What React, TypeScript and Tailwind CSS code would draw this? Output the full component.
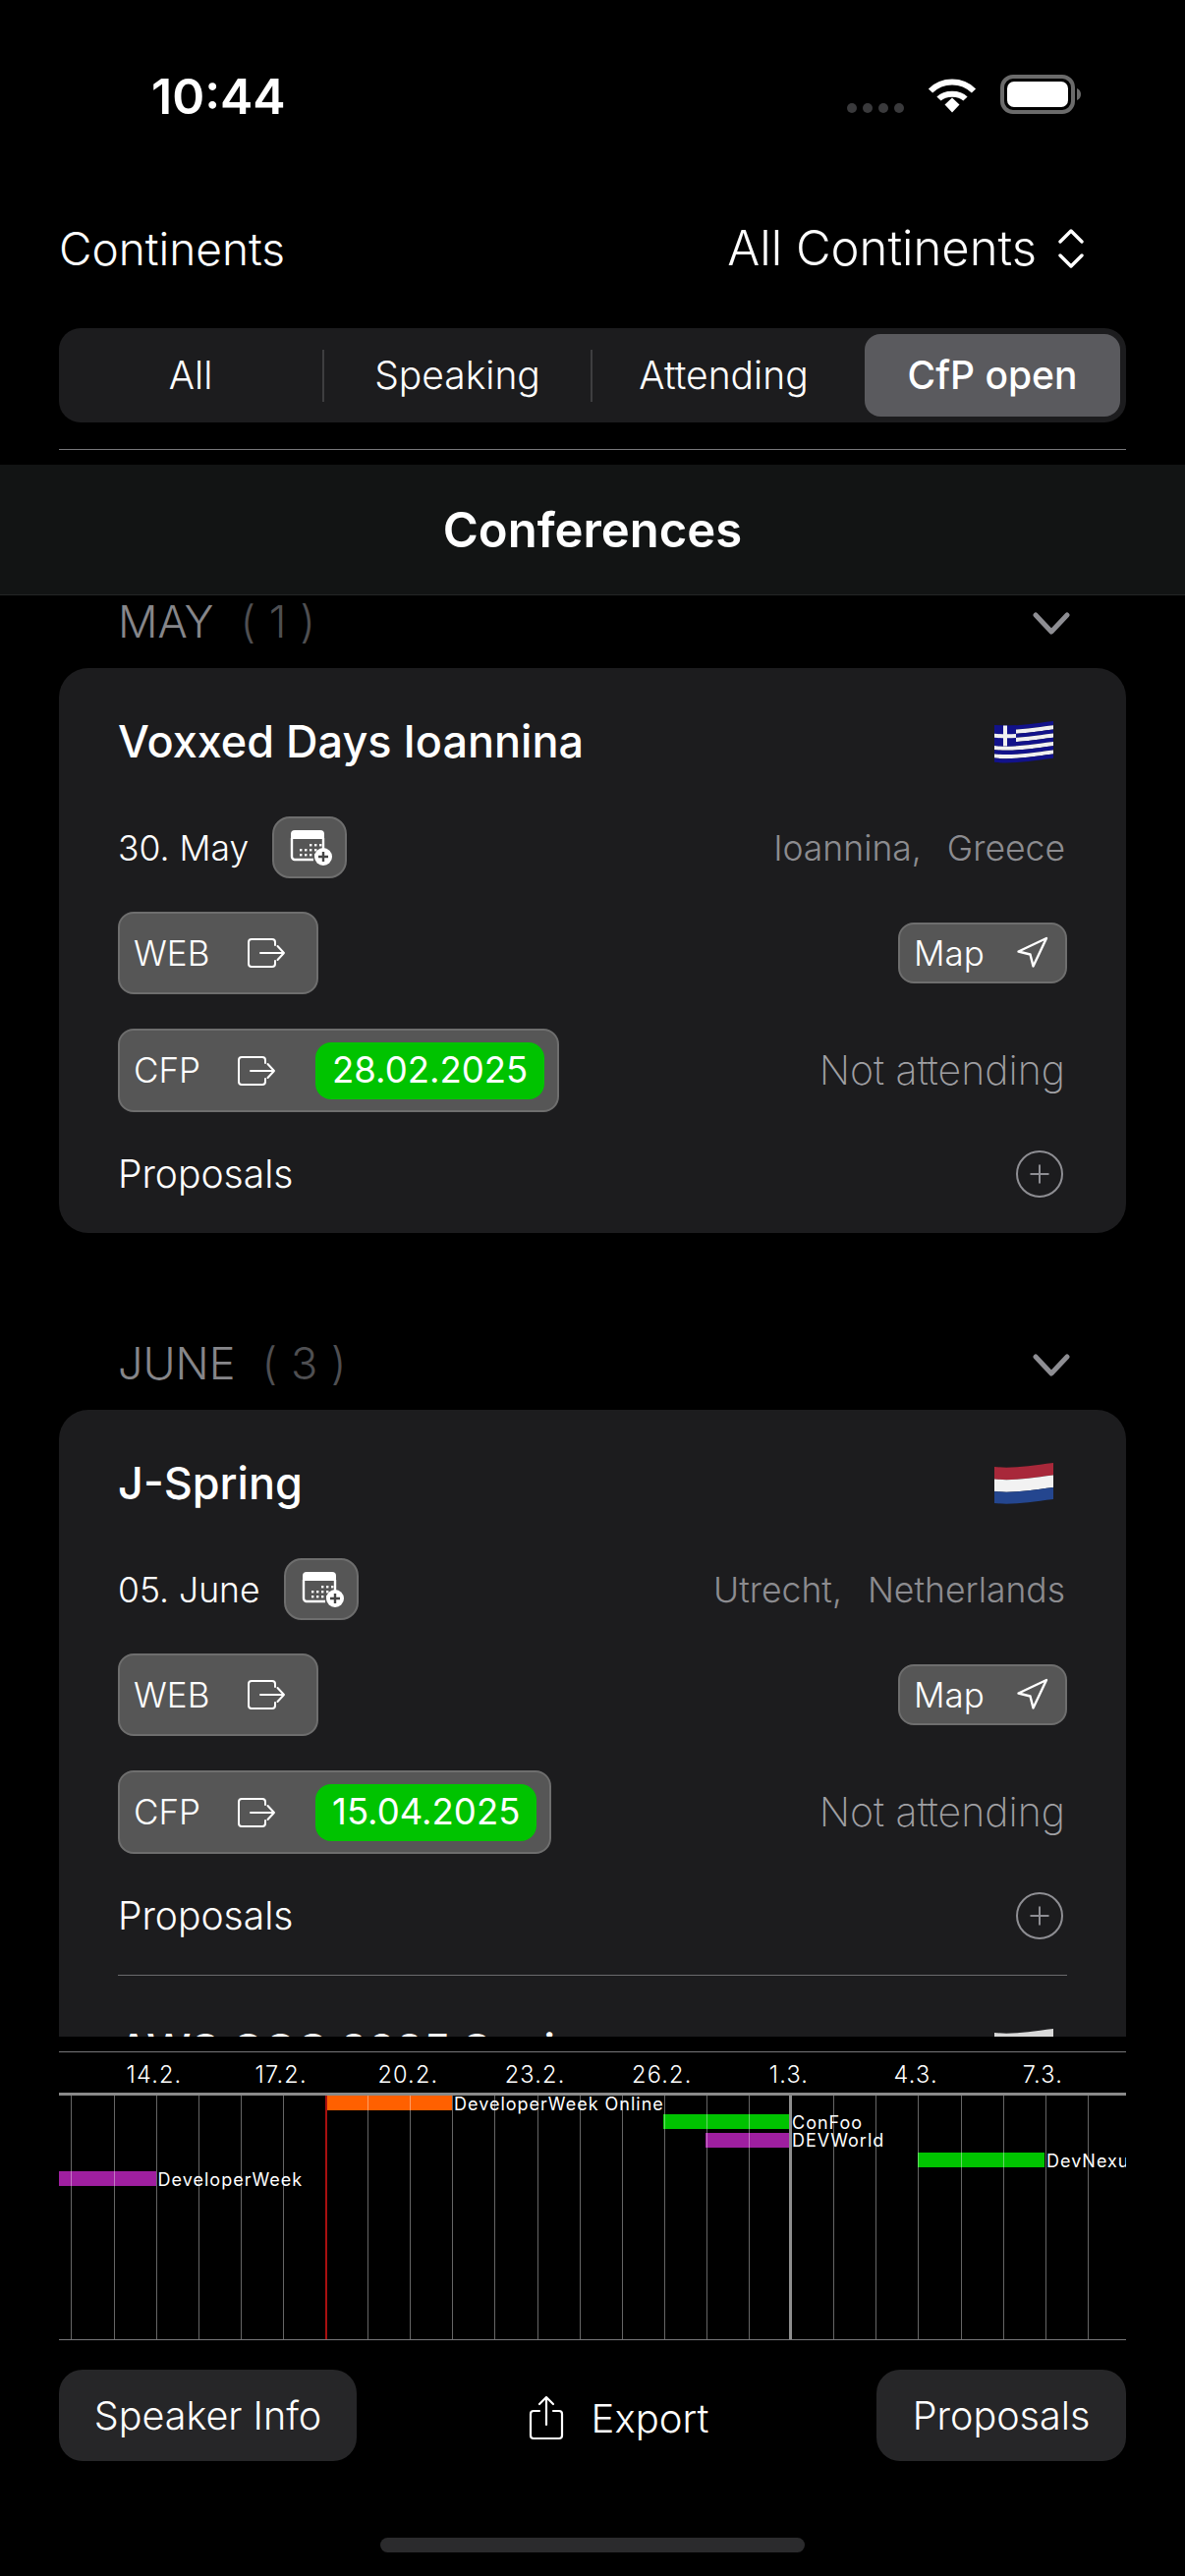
import { Navigation, Plus } from "lucide-react";

type Conf = {
  name: string;
  date: string;
  city: string;
  country: string;
  cfp: string;
  flag: "gr" | "nl";
  dateWidth: string;
};

const may: Conf[] = [
  { name: "Voxxed Days Ioannina", date: "30. May", city: "Ioannina,", country: "Greece", cfp: "28.02.2025", flag: "gr", dateWidth: "w-[157px]" },
];
const june: Conf[] = [
  { name: "J-Spring", date: "05. June", city: "Utrecht,", country: "Netherlands", cfp: "15.04.2025", flag: "nl", dateWidth: "w-[169px]" },
];

// chart: one column is 43.1px, offsets are from the left edge of the chart
const DAY = 43.1;
const bars = [
  { label: "DeveloperWeek Online", x: 271, w: 129, y: 0, color: "#ff6000" },
  { label: "ConFoo", x: 615, w: 129, y: 19, color: "#00c300" },
  { label: "DEVWorld", x: 658, w: 86, y: 38, color: "#9f1fa0" },
  { label: "DevNexus", x: 874, w: 129, y: 58, color: "#00c300" },
  { label: "DeveloperWeek", x: 0, w: 98.6, y: 77, color: "#9f1fa0" },
];
const ticks = ["14.2.", "17.2.", "20.2.", "23.2.", "26.2.", "1.3.", "4.3.", "7.3."];

function band(y1: number, y2: number) {
  const top = `M0 ${y1 + 4}C18 ${y1 + 6} 36 ${y1 + 3} 60 ${y1}`;
  const bottom = `L60 ${y2}C36 ${y2 + 3} 18 ${y2 + 6} 0 ${y2 + 4}Z`;
  return top + bottom;
}

function Flag(props: { kind: "gr" | "nl" }) {
  if (props.kind === "nl") {
    return (
      <svg width="60" height="46" viewBox="0 0 60 46">
        <path d={band(1, 13.5)} fill="#a8283a" />
        <path d={band(13.5, 26)} fill="#f2f2f2" />
        <path d={band(26, 38)} fill="#24468f" />
      </svg>
    );
  }
  const stripes = [0, 1, 2, 3, 4, 5, 6, 7, 8];
  return (
    <svg width="60" height="46" viewBox="0 0 60 46">
      {stripes.map((i) => (
        <path key={i} d={band(1 + i * 4.2, 1 + (i + 1) * 4.2)} fill={i % 2 === 0 ? "#12128a" : "#f0f0f0"} />
      ))}
      <path d="M0 5C7 5.6 14 5.8 22 5.2V26.2C14 26.8 7 26.6 0 26Z" fill="#12128a" />
      <path d="M9 5.5H13V26.5H9ZM0 13.8C7 14.4 14 14.6 22 14V18C14 18.6 7 18.4 0 17.8Z" fill="#f0f0f0" />
    </svg>
  );
}

function ExitIcon() {
  return (
    <svg width="40" height="32" viewBox="0 0 40 32" fill="none" stroke="#fff" strokeWidth="2" strokeLinecap="round" strokeLinejoin="round">
      <path d="M29 8V5a3 3 0 0 0-3-3H5a3 3 0 0 0-3 3v22a3 3 0 0 0 3 3h21a3 3 0 0 0 3-3v-3" />
      <path d="M14 16H38M31.5 9l6.5 7-6.5 7" />
    </svg>
  );
}

function CalendarPlus() {
  const dots = [
    [20, 15], [25, 15], [30, 15],
    [10, 20], [15, 20], [20, 20], [25, 20], [30, 20],
    [10, 25], [15, 25], [20, 25], [25, 25],
  ];
  return (
    <svg width="44" height="38" viewBox="0 0 44 38" fill="none">
      <path d="M5 1H31a4 4 0 0 1 4 4V10H1V5a4 4 0 0 1 4-4Z" fill="#fff" />
      <path d="M2 9V28a3 3 0 0 0 3 3H24M34 9V20" stroke="#fff" strokeWidth="2.4" />
      {dots.map(([x, y]) => (
        <rect key={`${x}-${y}`} x={x} y={y} width="2.4" height="2.4" fill="#fff" />
      ))}
      <circle cx="34" cy="28" r="9" fill="#fff" />
      <path d="M34 23V33M29 28H39" stroke="#444" strokeWidth="2.4" />
    </svg>
  );
}

function StatusBar() {
  return (
    <div className="h-[190px] flex items-center justify-between pl-[154px] pr-[106px]">
      <span className="mt-[5px] text-[50px] leading-none font-semibold text-white">10:44</span>
      <div className="flex items-center">
        <div className="flex gap-[6px] mt-[30px] mr-[24px]">
          <span className="w-[10px] h-[10px] rounded-full bg-[#3a3a3c]" />
          <span className="w-[10px] h-[10px] rounded-full bg-[#3a3a3c]" />
          <span className="w-[10px] h-[10px] rounded-full bg-[#3a3a3c]" />
          <span className="w-[10px] h-[10px] rounded-full bg-[#3a3a3c]" />
        </div>
        <svg className="mt-[3px]" width="50" height="36" viewBox="0 0 50 36" fill="none" stroke="#fff" strokeWidth="6">
          <path d="M3 13.5C15 1.5 35 1.5 47 13.5" />
          <path d="M11.5 21.5C18 15 32 15 38.5 21.5" />
          <path d="M17.5 27.5L25 20.5L32.5 27.5L25 35.5Z" fill="#fff" stroke="none" />
        </svg>
        <svg className="ml-[24px] mt-[2px]" width="82" height="40" viewBox="0 0 82 40" fill="none">
          <rect x="2" y="2" width="72" height="36" rx="11" stroke="#6b6b6b" strokeWidth="4" />
          <rect x="7" y="7" width="62" height="26" rx="7" fill="#fff" />
          <path d="M78 14C81 15 82 17.5 82 20C82 22.5 81 25 78 26Z" fill="#6b6b6b" />
        </svg>
      </div>
    </div>
  );
}

function Filters() {
  return (
    <div className="px-[60px]">
      <div className="h-[126px] flex items-center justify-between text-white pr-[41px]">
        <span className="text-[46px] font-light">Continents</span>
        <div className="flex items-center gap-[20px]">
          <span className="text-[49px] font-light">All Continents</span>
          <svg width="30" height="42" viewBox="0 0 30 42" fill="none" stroke="#fff" strokeWidth="3.4" strokeLinecap="round" strokeLinejoin="round">
            <path d="M4 14L15 3L26 14M4 28L15 39L26 28" />
          </svg>
        </div>
      </div>
      <div className="mt-[18px] h-[96px] rounded-[22px] bg-[#1c1c1e] flex items-center p-[6px] text-[39px] text-white font-light">
        <div className="w-[262px] pr-[6px] text-center">All</div>
        <div className="w-[2px] h-[53px] bg-[#3e3e40]" />
        <div className="w-[271px] text-center">Speaking</div>
        <div className="w-[2px] h-[53px] bg-[#3e3e40]" />
        <div className="w-[277px] pr-[10px] text-center">Attending</div>
        <div className="w-[260px] h-full rounded-[16px] bg-[#5a5a5e] flex items-center justify-center font-medium">CfP open</div>
      </div>
      <div className="mt-[27px] h-px bg-[#77777a]" />
    </div>
  );
}

function MonthHeader(props: { month: string; count: number }) {
  return (
    <div className="h-[95px] flex items-center justify-between pl-[60px] pr-[57px] text-[45px] font-light">
      <div className="flex gap-[27px] text-[#86868a]">
        <span>{props.month}</span>
        <span className="text-[#4f4f52] tracking-[0.5px]">( {props.count} )</span>
      </div>
      <svg className="mt-[5px]" width="38" height="24" viewBox="0 0 38 24" fill="none" stroke="#8e8e93" strokeWidth="5" strokeLinecap="round" strokeLinejoin="round">
        <path d="M3 3L19 20L35 3" />
      </svg>
    </div>
  );
}

function CardBody(props: { conf: Conf }) {
  const c = props.conf;
  return (
    <>
      <div className="h-[151px] flex items-center justify-between pr-[14px]">
        <span className="pb-[2px] text-[45px] font-medium text-white">{c.name}</span>
        <Flag kind={c.flag} />
      </div>
      <div className="h-[63px] flex items-center justify-between text-[35.5px]">
        <div className="flex items-center">
          <span className={`${c.dateWidth} pt-[2px] text-white font-light`}>{c.date}</span>
          <div className="w-[76px] h-[63px] rounded-[18px] bg-[#565656] border-2 border-[#6e6e6e] flex items-center justify-center pl-[4px]">
            <CalendarPlus />
          </div>
        </div>
        <div className="flex gap-[26px] pt-[2px] text-[#8c8c90] font-light pr-[2px]">
          <span>{c.city}</span>
          <span>{c.country}</span>
        </div>
      </div>
      <div className="mt-[34px] h-[84px] flex items-center justify-between text-[35px] text-white font-light">
        <div className="w-[204px] h-[84px] rounded-[16px] bg-[#565656] border-2 border-[#6e6e6e] flex items-center pl-[14px] gap-[38px]">
          <span>WEB</span>
          <ExitIcon />
        </div>
        <div className="w-[172px] h-[62px] rounded-[16px] bg-[#565656] border-2 border-[#6e6e6e] flex items-center justify-between pl-[14px] pr-[16px]">
          <span>Map</span>
          <Navigation size={36} strokeWidth={1.6} />
        </div>
      </div>
      <div className="mt-[35px] h-[85px] flex items-center justify-between">
        <div className="h-[85px] rounded-[16px] bg-[#565656] border-2 border-[#6e6e6e] flex items-center pl-[14px] pr-[13px] text-[35px] text-white font-light">
          <span>CFP</span>
          <span className="ml-[37px] mr-[40px]"><ExitIcon /></span>
          <span className="h-[58px] px-[17px] rounded-[16px] bg-[#00c300] flex items-center font-normal text-[36.5px]">{c.cfp}</span>
        </div>
        <span className="text-[41px] font-extralight text-[#a0a0a4] pr-[2px]">Not attending</span>
      </div>
      <div className="mt-[33px] h-[60px] flex items-center justify-between pr-[4px]">
        <span className="text-[39px] font-light text-white">Proposals</span>
        <div className="w-[48px] h-[48px] rounded-full border-2 border-[#8e8e93] flex items-center justify-center text-[#8e8e93]">
          <Plus size={30} strokeWidth={1.6} />
        </div>
      </div>
    </>
  );
}

function Gantt() {
  const lines = Array.from({ length: 25 }, (_, i) => 12.4 + i * DAY);
  return (
    <div className="mx-[60px] mt-[15px]">
      <div className="h-px bg-[#77777a]" />
      <div className="h-[41px] relative overflow-hidden text-[23.5px] tracking-[1.2px] text-white font-light">
        {ticks.map((t, i) => (
          <span key={t} className="absolute top-[5px] -translate-x-1/2" style={{ left: 97 + i * 129.2 }}>
            {t}
          </span>
        ))}
      </div>
      <div className="h-[3px] bg-[#8a8a8a]" />
      <div className="h-[248px] relative overflow-hidden">
        {bars.map((b) => (
          <div key={b.label}>
            <div className="absolute h-[15px]" style={{ left: b.x, width: b.w, top: b.y, background: b.color }} />
            <span
              className="absolute text-[18px] leading-[18px] tracking-[1px] whitespace-nowrap text-white"
              style={{ left: b.x + b.w + 2, top: b.y - (b.y === 38 ? 1 : 0) }}
            >
              {b.label}
            </span>
          </div>
        ))}
        {lines.map((x) => (
          <div key={x} className="absolute top-0 bottom-0 w-px bg-white/40" style={{ left: x }} />
        ))}
        <div className="absolute top-0 bottom-0 w-[2px] left-[271px] bg-[#a81010]" />
        <div className="absolute top-0 bottom-0 w-[3px] left-[743px] bg-[#8e8e8e]" />
      </div>
      <div className="h-px bg-[#77777a]" />
    </div>
  );
}

function BottomBar() {
  return (
    <div className="mt-[30px] mx-[60px] h-[93px] flex items-center justify-between text-[39.5px] text-white font-light">
      <div className="w-[303px] h-full rounded-[24px] bg-[#262628] flex items-center justify-center pt-[2px]">Speaker Info</div>
      <div className="flex items-center gap-[28px] mt-[4px] ml-[4px]">
        <svg width="36" height="46" viewBox="0 0 36 46" fill="none" stroke="#fff" strokeWidth="2.2" strokeLinecap="round" strokeLinejoin="round">
          <path d="M11 16H5a3 3 0 0 0-3 3v22a3 3 0 0 0 3 3h26a3 3 0 0 0 3-3V19a3 3 0 0 0-3-3h-6" />
          <path d="M18 30V2M11 9l7-7 7 7" />
        </svg>
        <span className="pt-[2px] text-[40px]">Export</span>
      </div>
      <div className="w-[254px] h-full rounded-[24px] bg-[#262628] flex items-center justify-center pt-[2px]">Proposals</div>
    </div>
  );
}

export default function App() {
  return (
    <div className="w-[1206px] h-[2622px] bg-black font-['Inter',sans-serif] overflow-hidden">
      <StatusBar />
      <Filters />
      <div className="mt-[15px] h-[133px] bg-[#121414] border-b border-[#242626] flex items-center justify-center pt-[2px] text-[49px] font-semibold text-white">
        Conferences
      </div>
      <div className="h-[1467px] overflow-hidden px-[60px]">
        <div className="-mt-[21px]">
          <MonthHeader month="MAY" count={1} />
          {may.map((c) => (
            <div key={c.name} className="rounded-[30px] bg-[#1c1c1e] px-[60px] pb-[30px]">
              <CardBody conf={c} />
            </div>
          ))}
          <div className="mt-[85px]">
            <MonthHeader month="JUNE" count={3} />
            <div className="rounded-[30px] bg-[#1c1c1e] px-[60px] pb-[30px]">
              {june.map((c) => (
                <CardBody key={c.name} conf={c} />
              ))}
              <div className="mt-[30px] h-px bg-[#6a6a6c]" />
              <div className="h-[151px] flex items-center justify-between pr-[14px]">
                <span className="text-[45px] font-medium text-white">AWS CCC 2025 Spain</span>
                <svg width="60" height="46" viewBox="0 0 60 46">
                  <path d={band(1, 38)} fill="#d8d8d8" />
                </svg>
              </div>
            </div>
          </div>
        </div>
      </div>
      <Gantt />
      <BottomBar />
      <div className="mt-[78px] mx-auto w-[432px] h-[15px] rounded-full bg-[#2b2b2d]" />
    </div>
  );
}
